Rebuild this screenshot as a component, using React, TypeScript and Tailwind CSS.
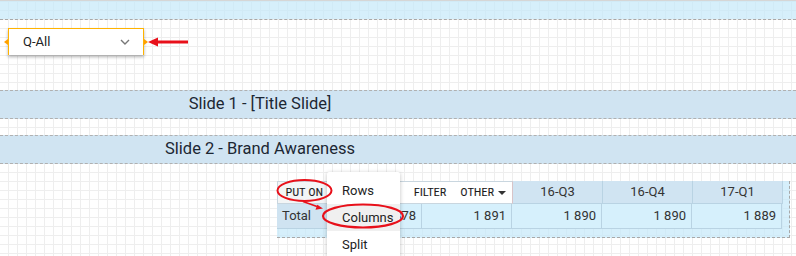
const quarters = [
  { label: "16-Q3", value: "1 890" },
  { label: "16-Q4", value: "1 890" },
  { label: "17-Q1", value: "1 889" },
];

const menuItems = ["Rows", "Columns", "Split"];

export default function App() {
  return (
    <div className="relative h-[256px] w-[796px] overflow-hidden bg-white bg-[linear-gradient(to_right,#eeeeee_1px,transparent_1px),linear-gradient(to_bottom,#eeeeee_1px,transparent_1px)] bg-[size:9px_9px] bg-[position:8px_1px] font-['Roboto',sans-serif] text-[#222]">
      {/* Top band */}
      <div className="flex h-[20px] flex-col border-b border-dashed border-[#a8a8a8]">
        <div className="h-px bg-[#d6d6d6]" />
        <div className="flex-1 bg-[#c4e8fa]/70" />
      </div>

      {/* Quarter selector */}
      <div className="mt-[8px] flex items-center pl-[8px]">
        <div className="relative flex h-[27px] w-[136px] items-center justify-between border border-b-0 border-[#ffb300] bg-white pl-[14px] pr-[13px] text-[13px] text-[#222] shadow-[0_2px_3px_rgba(0,0,0,0.3)]">
          <span>Q-All</span>
          <svg viewBox="0 0 10 6" className="h-[6px] w-[10px]">
            <path d="M1 1l4 4 4-4" fill="none" stroke="#777" strokeWidth="1.4" />
          </svg>
          <span className="absolute left-[-5px] top-[10px] h-0 w-0 border-y-[3.5px] border-r-[4px] border-y-transparent border-r-[#ffa000]" />
          <span className="absolute right-[-5px] top-[10px] h-0 w-0 border-y-[3.5px] border-l-[4px] border-y-transparent border-l-[#ffa000]" />
        </div>
        <svg viewBox="0 0 40 10" className="ml-[4px] h-[10px] w-[40px]">
          <path d="M9 5h31" stroke="#e8101a" strokeWidth="3" />
          <path d="M0 5l10-4.5v9z" fill="#e8101a" />
        </svg>
      </div>

      {/* Slide bars */}
      <div className="mt-[35px] flex h-[29px] items-center border-y border-dashed border-[#b0b0b0] bg-[#d0e4f2]">
        <div className="w-[520px] text-center text-[16.5px] text-[#1c2733]">Slide 1 - [Title Slide]</div>
      </div>
      <div className="mt-[16px] flex h-[29px] items-center border-y border-dashed border-[#b0b0b0] bg-[#d0e4f2]">
        <div className="w-[520px] text-center text-[16.5px] text-[#1c2733]">Slide 2 - Brand Awareness</div>
      </div>

      {/* Pivot table */}
      <div className="ml-[277px] mt-[17px] h-[57px] w-[513px] border-b border-r border-dashed border-[#a8a8a8] bg-[#c4e8fa]/70">
        <div className="flex h-[23px]">
          <div className="flex w-[236px] items-center whitespace-nowrap border border-[#c9d6df] border-r-[#d8c4c8] bg-white text-[10px] tracking-[0.04em] text-[#1a1a1a] [-webkit-text-stroke:0.2px_#1a1a1a]">
            <div className="flex h-full w-[53px] shrink-0 items-center justify-center bg-[#f3f5f6]">PUT ON</div>
            <span className="ml-[83px]">FILTER</span>
            <span className="ml-[14px]">OTHER</span>
            <svg viewBox="0 0 8 4" className="ml-auto mr-[6px] h-[4px] w-[8px] shrink-0">
              <path d="M0 0h8L4 4z" fill="#333" />
            </svg>
          </div>
          {quarters.map((q) => (
            <div
              key={q.label}
              className="flex w-[90px] items-center justify-center border-r border-b border-[#b9d3e3] bg-[#d0e4f2] text-[13px] text-[#333]"
            >
              {q.label}
            </div>
          ))}
        </div>
        <div className="flex h-[25px] text-[13px] text-[#333]">
          <div className="flex w-[53px] items-center border-r border-b border-[#b9d3e3] bg-[#cfe3f1] pl-[5px]">Total</div>
          <div className="flex w-[92px] items-center justify-end border-r border-b border-[#b9d3e3] bg-[#d6f0fc] pr-[5px]">1 878</div>
          <div className="flex w-[90px] items-center justify-end border-r border-b border-[#b9d3e3] bg-[#d6f0fc] pr-[5px]">1 891</div>
          {quarters.map((q) => (
            <div
              key={q.label}
              className="flex w-[90px] items-center justify-end border-r border-b border-[#b9d3e3] bg-[#d6f0fc] pr-[5px]"
            >
              {q.value}
            </div>
          ))}
        </div>
      </div>

      {/* Put-on menu */}
      <div className="absolute left-[327px] top-[172px] w-[73px] rounded-[2px] bg-white pt-[5px] text-[13px] text-[#222] shadow-[0_1px_4px_rgba(0,0,0,0.25)]">
        {menuItems.map((item) => (
          <div
            key={item}
            className={`flex h-[27px] items-center pl-[15px] ${item === "Columns" ? "bg-[#f0f0f0]" : ""}`}
          >
            {item}
          </div>
        ))}
      </div>

      {/* Annotations */}
      <svg className="pointer-events-none absolute left-0 top-0 h-[256px] w-[796px]" viewBox="0 0 796 256">
        <ellipse cx="304.5" cy="190.5" rx="27" ry="10.5" fill="none" stroke="#e8101a" strokeWidth="2" />
        <ellipse cx="363" cy="216" rx="40" ry="11.5" fill="none" stroke="#e8101a" strokeWidth="2.2" />
        <path d="M303 201.5l14 5" stroke="#e8101a" strokeWidth="1.6" />
        <path d="M323 208.5l-7.5 1.2 1.8-5z" fill="#e8101a" />
      </svg>
    </div>
  );
}
